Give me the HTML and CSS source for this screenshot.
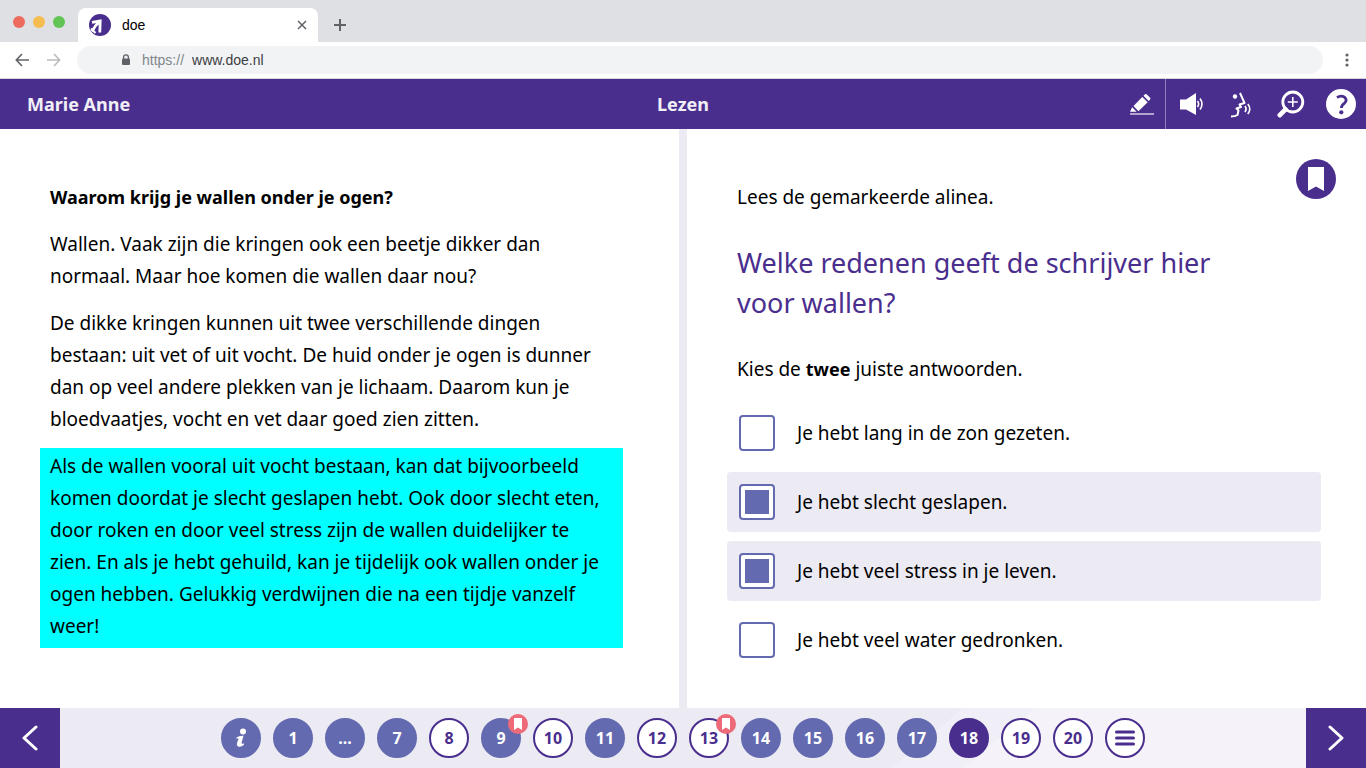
FILE: index.html
```html
<!DOCTYPE html>
<html lang="nl">

<head>
    <meta charset="utf-8">
    <meta name="viewport" content="width=device-width, initial-scale=1.0">
    <title>doe</title>

    <link rel="stylesheet" href="styles.css">
</head>

<body>

    <!-- browser -->
    <div class="browser">
        <div class="tabs">
            <div class="lights">
                <span class="light red"></span>
                <span class="light yellow"></span>
                <span class="light green"></span>
            </div>
            <div class="tab">
                <svg class="logo" width="22" height="22" viewBox="0 0 22 22">
                    <circle cx="11" cy="11" r="11" fill="#4a2e8e" />
                    <path d="M3 8.300l8.200-1.300-.4 11.500M10.800 7.300Q6 11.500 3 17.500" fill="none" stroke="#fff" stroke-width="2.800" />
                    <path d="M2 14.500l4.500 4.500" stroke="#fff" stroke-width="2" />
                </svg>
                <span>doe</span>
                <button class="close" aria-label="Tabblad sluiten">
                    <svg width="10" height="10" viewBox="0 0 10 10"><path d="M1 1l8 8M9 1L1 9" stroke="#5f6368" stroke-width="1.500" /></svg>
                </button>
            </div>
            <button class="new" aria-label="Nieuw tabblad">
                <svg width="12" height="12" viewBox="0 0 12 12"><path d="M6 0v12M0 6h12" stroke="#5f6368" stroke-width="2" /></svg>
            </button>
        </div>
        <div class="toolbar">
            <button aria-label="Vorige pagina">
                <svg width="14" height="14" viewBox="0 0 14 14"><path d="M14 7H1.500M7 1L1.300 7 7 13" fill="none" stroke="#5f6368" stroke-width="1.600" /></svg>
            </button>
            <button aria-label="Volgende pagina">
                <svg width="14" height="14" viewBox="0 0 14 14"><path d="M0 7h12.500M7 1l5.700 6L7 13" fill="none" stroke="#babcbe" stroke-width="1.600" /></svg>
            </button>
            <label class="address">
                <svg width="10" height="12" viewBox="0 0 10 12">
                    <path d="M2.600 5V3.200a2.400 2.400 0 0 1 4.800 0V5" fill="none" stroke="#5f6368" stroke-width="1.300" />
                    <rect x="1" y="4.500" width="8" height="6.500" rx="1" fill="#5f6368" />
                </svg>
                <span>https://</span>
                <input type="text" value="www.doe.nl" aria-label="Adres">
            </label>
            <button class="more" aria-label="Meer">
                <svg width="4" height="14" viewBox="0 0 4 14" fill="#5f6368"><circle cx="2" cy="2" r="1.600" /><circle cx="2" cy="7" r="1.600" /><circle cx="2" cy="12" r="1.600" /></svg>
            </button>
        </div>
    </div>

    <header>
        <span class="name">Marie Anne</span>
        <h1>Lezen</h1>
        <div class="tools">
            <button class="marker" aria-label="Markeren">
                <svg width="26" height="24" viewBox="0 0 26 24">
                    <path d="M5.500 14L14.300 5l5.400 5.300L10.400 19.300z" fill="#fff" />
                    <path d="M15.500 3.800L17 2.200q.8-.6 1.600.1l3.500 3.500q.7.8 0 1.600l-1.400 1.700z" fill="#fff" />
                    <path d="M4.200 15.300l4.400 4.500H2z" fill="#fff" />
                    <path d="M2 22h24" stroke="#d5cde6" stroke-width="1.500" />
                </svg>
            </button>
            <button aria-label="Voorlezen">
                <svg width="26" height="26" viewBox="0 0 26 26">
                    <path d="M2 8.500h6L18 2v22L8 18.500H2z" fill="#fff" />
                    <path d="M19.500 10q2.200 3 0 6M22 7.500q4 5.500 0 11" fill="none" stroke="#fff" stroke-width="1.600" />
                </svg>
            </button>
            <button aria-label="Uitspraak">
                <svg width="24" height="28" viewBox="0 0 24 28">
                    <circle cx="6" cy="6.500" r="2.200" fill="#fff" />
                    <path d="M11 3l4.500 10-5 1.500 1.500 2.500-4.500 1.500 2 2-1 4.500Q6 26.500 2 26.500" fill="none" stroke="#fff" stroke-width="2" stroke-linejoin="round" />
                    <path d="M16 16q2.200 3 0 6M18.800 14q4 5 0 10" fill="none" stroke="#fff" stroke-width="1.600" />
                </svg>
            </button>
            <button aria-label="Vergroten">
                <svg width="28" height="28" viewBox="0 0 28 28">
                    <circle cx="15.800" cy="12" r="10" fill="none" stroke="#fff" stroke-width="2.800" />
                    <path d="M8.500 19.300L2.800 25.200" stroke="#fff" stroke-width="4.600" stroke-linecap="round" />
                    <path d="M15.800 7v10M10.800 12h10" stroke="#fff" stroke-width="1.600" />
                </svg>
            </button>
            <button aria-label="Help">
                <svg width="30" height="30" viewBox="0 0 30 30">
                    <circle cx="15" cy="15" r="15" fill="#fff" />
                    <path d="M11 8.500q4-2.400 7.400-.4 3.400 2.900.2 6-3.200 2.200-3.200 5" fill="none" stroke="#4a2e8e" stroke-width="2.800" />
                    <circle cx="15.300" cy="23.300" r="2.100" fill="#4a2e8e" />
                </svg>
            </button>
        </div>
    </header>

    <main>
        <article class="text">
            <h2>Waarom krijg je wallen onder je ogen?</h2>
            <p>Wallen. Vaak zijn die kringen ook een beetje dikker dan normaal. Maar hoe komen die wallen daar nou?</p>
            <p>De dikke kringen kunnen uit twee verschillende dingen bestaan: uit vet of uit vocht. De huid onder je ogen is dunner dan op veel andere plekken van je lichaam. Daarom kun je bloedvaatjes, vocht en vet daar goed zien zitten.</p>
            <p class="highlight">Als de wallen vooral uit vocht bestaan, kan dat bijvoorbeeld komen doordat je slecht geslapen hebt. Ook door slecht eten, door roken en door veel stress zijn de wallen duidelijker te zien. En als je hebt gehuild, kan je tijdelijk ook wallen onder je ogen hebben. Gelukkig verdwijnen die na een tijdje vanzelf weer!</p>
        </article>

        <section class="question">
            <button class="bookmark" aria-label="Bladwijzer">
                <svg width="16" height="24" viewBox="0 0 16 24"><path d="M0 0h16v24l-8-4.500L0 24z" fill="#fff" /></svg>
            </button>
            <p>Lees de gemarkeerde alinea.</p>
            <h2>Welke redenen geeft de schrijver hier voor wallen?</h2>
            <p>Kies de <b>twee</b> juiste antwoorden.</p>

            <div class="answers">
                <label class="answer"><input type="checkbox"> Je hebt lang in de zon gezeten.</label>
                <label class="answer"><input type="checkbox" checked> Je hebt slecht geslapen.</label>
                <label class="answer"><input type="checkbox" checked> Je hebt veel stress in je leven.</label>
                <label class="answer"><input type="checkbox"> Je hebt veel water gedronken.</label>
            </div>
        </section>
    </main>

    <footer>
        <button class="arrow" aria-label="Vorige">
            <svg width="16" height="26" viewBox="0 0 16 26"><path d="M14 2L2 13l12 11" fill="none" stroke="#fff" stroke-width="3" stroke-linecap="round" stroke-linejoin="round" /></svg>
        </button>
        <nav>
            <button class="page done" aria-label="Informatie">
                <svg width="12" height="20" viewBox="0 0 12 20">
                    <circle cx="8" cy="3.600" r="3" fill="#fff" />
                    <path d="M1.500 9.500Q4 7.500 8.500 7.800L6.500 15q0 1.300 2.500.2v1.600Q6 19.600 3 18.600 1.200 17.600 2 15.200L3.500 10.700Q3 10 1.200 10.800z" fill="#fff" />
                </svg>
            </button>
            <button class="page done">1</button>
            <button class="page done">...</button>
            <button class="page done">7</button>
            <button class="page">8</button>
            <button class="page done">9
                <svg class="flag" width="20" height="20" viewBox="0 0 20 20"><circle cx="10" cy="10" r="10" fill="#ed6a78" /><path d="M6 4h8v12l-4-2.500L6 16z" fill="#fff" /></svg>
            </button>
            <button class="page">10</button>
            <button class="page done">11</button>
            <button class="page">12</button>
            <button class="page">13
                <svg class="flag" width="20" height="20" viewBox="0 0 20 20"><circle cx="10" cy="10" r="10" fill="#ed6a78" /><path d="M6 4h8v12l-4-2.500L6 16z" fill="#fff" /></svg>
            </button>
            <button class="page done">14</button>
            <button class="page done">15</button>
            <button class="page done">16</button>
            <button class="page done">17</button>
            <button class="page current">18</button>
            <button class="page">19</button>
            <button class="page">20</button>
            <button class="page" aria-label="Overzicht">
                <svg width="20" height="16" viewBox="0 0 20 16"><path d="M1.500 2h17M1.500 8h17M1.500 14h17" stroke="#4a2e8e" stroke-width="3" stroke-linecap="round" /></svg>
            </button>
        </nav>
        <button class="arrow" aria-label="Volgende">
            <svg width="16" height="26" viewBox="0 0 16 26"><path d="M2 2l12 11L2 24" fill="none" stroke="#fff" stroke-width="3" stroke-linecap="round" stroke-linejoin="round" /></svg>
        </button>
    </footer>

</body>

</html>
```
FILE: styles.css
```css
* {
    box-sizing: border-box;
}

body {
    margin: 0;
    min-height: 100vh;
    display: flex;
    flex-direction: column;
    font-family: "Noto Sans", sans-serif;
    font-size: 19px;
    line-height: 32px;
    color: #000;
    background-color: #fff;
}

button {
    display: flex;
    align-items: center;
    justify-content: center;
    padding: 0;
    border: 0;
    background: none;
    font: inherit;
    cursor: pointer;
}

h1, h2, p {
    margin: 0;
}

/* browser */
.browser {
    font-family: "Liberation Sans", sans-serif;
    font-size: 14px;
    line-height: 20px;
    border-bottom: 1px solid #d6d6da;
}

.tabs {
    display: flex;
    height: 42px;
    padding-top: 8px;
    background-color: #dfe0e4;
}

.lights {
    display: flex;
    gap: 8px;
    width: 78px;
    padding: 8px 0 0 13px;
}

.light {
    width: 12px;
    height: 12px;
    border-radius: 50%;
}

.red {
    background-color: #ed6a5e;
}

.yellow {
    background-color: #f5bd4f;
}

.green {
    background-color: #61c454;
}

.tab {
    display: flex;
    align-items: center;
    gap: 11px;
    width: 240px;
    padding: 0 11px;
    border-radius: 8px 8px 0 0;
    background-color: #fff;
}

.close {
    margin-left: auto;
}

.new {
    width: 44px;
}

.toolbar {
    display: flex;
    align-items: center;
    height: 36px;
    padding-left: 6px;
}

.toolbar button {
    width: 32px;
}

.toolbar .more {
    width: 43px;
    padding-left: 5px;
}

.address {
    display: flex;
    flex: 1;
    align-items: center;
    height: 28px;
    margin-left: 7px;
    padding-left: 44px;
    border-radius: 14px;
    background-color: #f1f3f4;
    color: #80868b;
}

.address span {
    margin: 0 8px 0 11px;
}

.address input {
    flex: 1;
    padding: 0;
    border: 0;
    background: none;
    font: inherit;
    color: #3c4043;
}

/* header */
header {
    display: grid;
    grid-template-columns: 1fr auto 1fr;
    align-items: center;
    height: 50px;
    background-color: #4a2e8e;
    color: #f1eff6;
    font-size: 18px;
    font-weight: bold;
}

.name {
    padding-left: 27px;
}

h1 {
    font-size: 18px;
}

.tools {
    display: flex;
    justify-content: flex-end;
}

.tools button {
    width: 50px;
    height: 50px;
}

.tools .marker {
    border-right: 1px solid #9282bb;
}

/* content */
main {
    flex: 1;
    display: grid;
    grid-template-columns: 1fr 1fr;
}

.text {
    padding: 52px 52px 30px 40px;
    border-right: 4px solid #eceaf3;
}

.text h2,
.text p {
    max-width: 583px;
    margin-bottom: 15px;
    padding: 0 10px;
}

.text h2 {
    font-size: 18px;
}

.text .highlight {
    margin-top: -2px;
    padding: 2px 10px 6px;
    background-color: #00ffff;
}

.question {
    position: relative;
    padding: 52px 45px 30px 50px;
    border-left: 4px solid #eceaf3;
}

.question h2 {
    max-width: 520px;
    margin: 30px 0;
    font-size: 27px;
    font-weight: normal;
    line-height: 40px;
    color: #4a2e8e;
}

.question b {
    font-size: 18px;
}

.bookmark {
    position: absolute;
    top: 30px;
    right: 30px;
    width: 40px;
    height: 40px;
    border-radius: 50%;
    background-color: #4a2e8e;
}

.answers {
    display: grid;
    gap: 9px;
    margin: 18px 0 0 -10px;
}

.answer {
    display: flex;
    align-items: center;
    gap: 22px;
    min-height: 60px;
    padding: 0 12px;
    border-radius: 4px;
}

.answer:has(:checked) {
    background-color: #eceaf3;
}

.answer input {
    appearance: none;
    width: 36px;
    height: 36px;
    margin: 0;
    border: 2px solid #646ab0;
    border-radius: 4px;
    background-color: #fff;
}

.answer input:checked {
    padding: 4px;
    background-color: #646ab0;
    background-clip: content-box;
    box-shadow: inset 0 0 0 4px #fff;
}

/* navigation */
footer {
    display: flex;
    background: linear-gradient(140deg, #eceaf3 67%, #f0eef6 67%, #f0eef6 72%, #f5f3f9 72%);
}

.arrow {
    width: 60px;
    height: 60px;
    background-color: #4a2e8e;
}

nav {
    flex: 1;
    display: flex;
    align-items: center;
    justify-content: center;
    gap: 12px;
}

.page {
    position: relative;
    width: 40px;
    height: 40px;
    border: 2px solid #4a2e8e;
    border-radius: 50%;
    background-color: #fff;
    color: #4a2e8e;
    font-size: 16px;
    font-weight: bold;
}

.done {
    border-color: #646ab0;
    background-color: #646ab0;
    color: #fff;
}

.current {
    background-color: #4a2e8e;
    color: #fff;
}

.flag {
    position: absolute;
    top: -6px;
    right: -9px;
}
```
